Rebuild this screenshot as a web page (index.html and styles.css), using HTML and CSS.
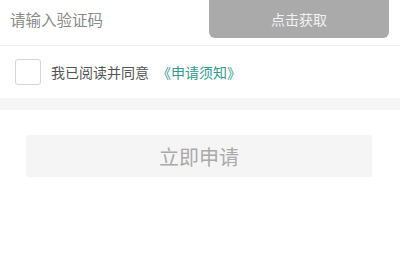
FILE: index.html
```html
<!DOCTYPE html>
<html lang="zh-CN">
<head>
    <meta charset="UTF-8">
    <meta name="viewport" content="width=device-width, initial-scale=1.0">
    <title>申请</title>
    <link rel="stylesheet" href="styles.css">
</head>
<body>
    <div class="code-row">
        <input class="code-input" type="text" placeholder="请输入验证码">
        <button class="code-btn">点击获取</button>
    </div>

    <label class="agree-row">
        <span class="check-box"></span>
        <span class="agree-text">我已阅读并同意</span>
        <a class="agree-link" href="#">《申请须知》</a>
    </label>

    <div class="gap-band"></div>

    <div class="submit-wrap">
        <button class="submit-btn">立即申请</button>
    </div>
</body>
</html>
```

FILE: styles.css
```css
:root {
    --line-color: #eeeeee;
    --band-color: #f5f5f5;
    --link-color: #33998f;
}
body {
    margin: 0;
    background: #fff;
    font-family: "Noto Sans CJK SC", "Noto Sans", sans-serif;
    color: #555;
}
.code-row {
    display: flex;
    align-items: flex-start;
    height: 45px;
    border-bottom: 1px solid var(--line-color);
}
.code-input {
    flex: 1;
    height: 38px;
    padding: 0 0 0 10px;
    border: none;
    outline: none;
    font-family: inherit;
    font-size: 15.5px;
    color: #333;
    background: transparent;
}
.code-input::placeholder {
    color: #8a8a8a;
}
.code-btn {
    width: 180px;
    height: 38px;
    margin-right: 11px;
    border: none;
    border-radius: 0 0 6px 6px;
    background: #aaaaaa;
    color: #f2f2f2;
    font-family: inherit;
    font-size: 14px;
}
.agree-row {
    display: flex;
    align-items: center;
    height: 52px;
    padding: 0 15px;
    font-size: 14px;
}
.check-box {
    width: 24px;
    height: 24px;
    border: 1px solid #d6d6d6;
    border-radius: 3px;
    margin-right: 10px;
}
.agree-text {
    color: #555;
}
.agree-link {
    color: var(--link-color);
    text-decoration: none;
    margin-left: 8px;
}
.gap-band {
    height: 12px;
    background: var(--band-color);
}
.submit-wrap {
    padding: 25px 28px 0 26px;
}
.submit-btn {
    display: block;
    width: 100%;
    height: 42px;
    border: none;
    border-radius: 3px;
    background: #f5f5f5;
    box-shadow: 0 1px 2px rgba(0,0,0,0.03);
    color: #aaa;
    font-family: inherit;
    font-size: 20px;
}
```
